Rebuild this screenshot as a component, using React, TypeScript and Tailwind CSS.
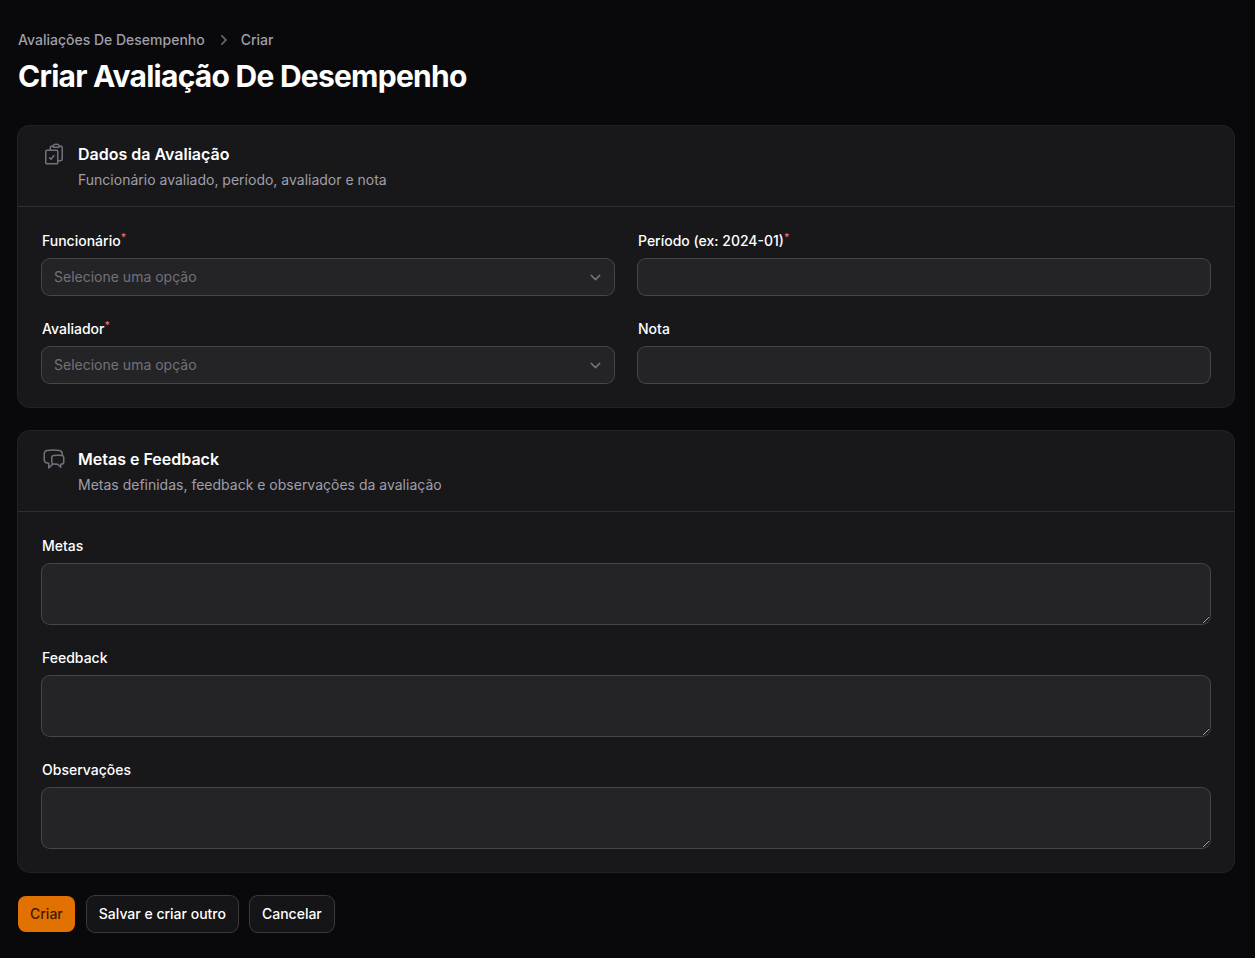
import type { ReactNode } from "react"
import {
  HiMiniChevronRight,
  HiOutlineChatBubbleLeftRight,
  HiOutlineClipboardDocumentCheck,
} from "react-icons/hi2"

interface FieldProps {
  id: string
  label: string
  required?: boolean
  children: ReactNode
}

function Field({ id, label, required, children }: FieldProps) {
  return (
    <div className="flex flex-col gap-2">
      <label htmlFor={id} className="text-sm leading-5 font-medium text-white">
        {label}
        {required && <sup className="font-medium text-[#ff6467]">*</sup>}
      </label>
      <div className="flex rounded-lg bg-white/5 ring-1 ring-white/20 overflow-hidden">
        {children}
      </div>
    </div>
  )
}

function SelectButton({ id }: { id: string }) {
  return (
    <button
      type="button"
      id={id}
      className="flex h-9 w-full items-center justify-between pr-2 pl-3 text-left text-sm text-[#71717b]"
    >
      <span>Selecione uma opção</span>
      <svg
        viewBox="0 0 20 20"
        fill="none"
        className="size-[21px] stroke-[#6b7280]"
      >
        <path
          d="M6 8l4 4 4-4"
          strokeWidth="1.5"
          strokeLinecap="round"
          strokeLinejoin="round"
        />
      </svg>
    </button>
  )
}

function TextInput({ id }: { id: string }) {
  return (
    <input
      type="text"
      id={id}
      className="h-9 w-full bg-transparent px-3 text-sm text-white outline-none"
    />
  )
}

function TextArea({ id }: { id: string }) {
  return (
    <textarea
      id={id}
      className="block h-15 w-full resize-y bg-transparent px-3 py-1.5 text-sm text-white outline-none"
    />
  )
}

interface SectionProps {
  icon: ReactNode
  title: string
  description: string
  children: ReactNode
}

function Section({ icon, title, description, children }: SectionProps) {
  return (
    <section className="rounded-xl bg-[#18181b] ring-1 ring-white/10">
      <header className="flex gap-3 px-6 py-4 text-[#71717b]">
        {icon}
        <div className="grid gap-1">
          <h2 className="text-base leading-6 font-semibold text-white">
            {title}
          </h2>
          <p className="text-sm leading-5 text-[#9f9fa9]">{description}</p>
        </div>
      </header>
      <div className="border-t border-white/10 p-6">{children}</div>
    </section>
  )
}

export default function App() {
  return (
    <main className="min-h-screen bg-[#09090b] pt-[30px] pr-[21px] pl-[18px] font-['Inter',sans-serif] scheme-dark">
      <nav className="flex items-center gap-2 text-sm leading-5 font-medium text-[#9f9fa9]">
        <a href="#">Avaliações De Desempenho</a>
        <HiMiniChevronRight className="size-5 text-[#71717b]" />
        <span>Criar</span>
      </nav>
      <h1 className="mt-2 text-3xl leading-9 font-bold tracking-tight text-white">
        Criar Avaliação De Desempenho
      </h1>

      <form className="mt-8 flex flex-col gap-6">
        <Section
          icon={<HiOutlineClipboardDocumentCheck className="size-6" />}
          title="Dados da Avaliação"
          description="Funcionário avaliado, período, avaliador e nota"
        >
          <div className="grid grid-cols-2 gap-6">
            <Field id="funcionario" label="Funcionário" required>
              <SelectButton id="funcionario" />
            </Field>
            <Field id="periodo" label="Período (ex: 2024-01)" required>
              <TextInput id="periodo" />
            </Field>
            <Field id="avaliador" label="Avaliador" required>
              <SelectButton id="avaliador" />
            </Field>
            <Field id="nota" label="Nota">
              <TextInput id="nota" />
            </Field>
          </div>
        </Section>

        <Section
          icon={<HiOutlineChatBubbleLeftRight className="size-6" />}
          title="Metas e Feedback"
          description="Metas definidas, feedback e observações da avaliação"
        >
          <div className="grid gap-6">
            <Field id="metas" label="Metas">
              <TextArea id="metas" />
            </Field>
            <Field id="feedback" label="Feedback">
              <TextArea id="feedback" />
            </Field>
            <Field id="observacoes" label="Observações">
              <TextArea id="observacoes" />
            </Field>
          </div>
        </Section>

        <div className="flex gap-3 text-sm leading-5">
          <button
            type="button"
            className="rounded-lg bg-[#e17100] px-3 py-2 font-medium text-[#461901]"
          >
            Criar
          </button>
          <button
            type="button"
            className="rounded-lg bg-white/5 px-3 py-2 font-medium text-white ring-1 ring-white/20"
          >
            Salvar e criar outro
          </button>
          <button
            type="button"
            className="rounded-lg bg-white/5 px-3 py-2 font-medium text-white ring-1 ring-white/20"
          >
            Cancelar
          </button>
        </div>
      </form>
    </main>
  )
}
